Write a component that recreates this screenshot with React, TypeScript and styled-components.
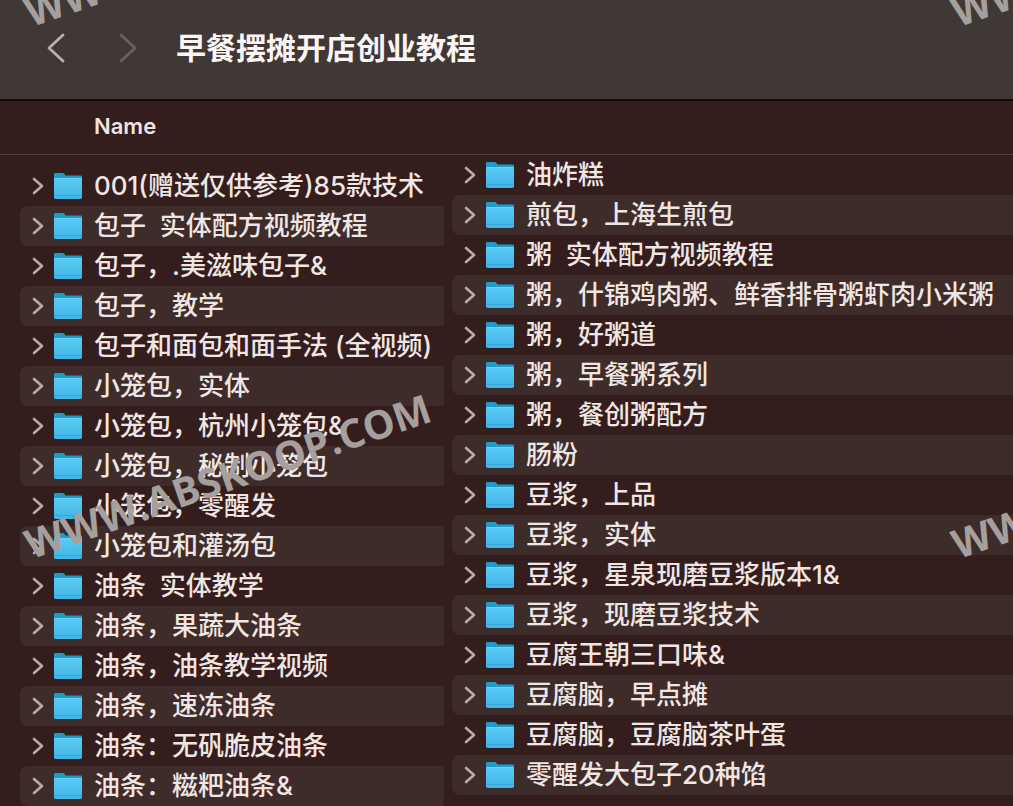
import React from "react";
import styled, { createGlobalStyle } from "styled-components";

const GlobalStyle = createGlobalStyle`
  *, *::before, *::after { box-sizing: border-box; }
  body {
    margin: 0;
    background: #341e1d;
    color: #efe6e4;
    font-family: Inter, "Noto Sans CJK SC", sans-serif;
  }
  button { font: inherit; }
`;

const Window = styled.div`
  position: relative;
  min-height: 100vh;
  overflow: hidden;
`;

const Toolbar = styled.header`
  display: flex;
  align-items: center;
  height: 101px;
  padding: 0 40px 4px;
  background: #403836;
  border-bottom: 2px solid #140a0a;
`;

const NavButton = styled.button`
  display: grid;
  place-items: center;
  width: 32px;
  height: 40px;
  margin-right: 40px;
  padding: 0;
  border: 0;
  background: none;
  color: #b8b0ae;

  &:disabled {
    color: #6a605e;
  }
`;

const Title = styled.h1`
  margin: 0 0 0 -8px;
  color: #fbf5f3;
  font-size: 30px;
  font-weight: 700;
  line-height: 40px;
  white-space: nowrap;
`;

const ColumnHeader = styled.div`
  height: 54px;
  padding: 0 94px;
  border-bottom: 1px solid #533c39;
  color: #f0e4e2;
  font-size: 22px;
  font-weight: 600;
  line-height: 50px;
`;

const Columns = styled.main`
  display: grid;
  grid-template-columns: minmax(444px, 43%) 1fr;
  column-gap: 8px;
`;

const List = styled.ul<{ $side: "left" | "right" }>`
  margin: 0;
  padding: ${(p) => (p.$side === "left" ? "11px 0 0 20px" : "0")};
  list-style: none;
  min-width: 0;
`;

const Row = styled.li<{ $side: "left" | "right" }>`
  display: flex;
  align-items: center;
  height: 40px;
  padding-left: 11px;
  border-radius: ${(p) => (p.$side === "left" ? "8px 2px 2px 8px" : "8px 0 0 8px")};

  &:nth-child(even) {
    background: #3e2c2a;
  }
`;

const Disclosure = styled.button`
  display: grid;
  place-items: center;
  flex: none;
  width: 14px;
  height: 24px;
  margin-right: 8px;
  padding: 0;
  border: 0;
  background: none;
  color: #b8acaa;
`;

const Folder = styled.svg`
  flex: none;
  width: 30px;
  height: 28px;
  margin-right: 11px;
`;

const FileName = styled.span`
  font-size: 26px;
  font-weight: 500;
  line-height: 40px;
  white-space: pre;
`;

const Watermark = styled.span<{ $x: number; $y: number }>`
  position: absolute;
  left: ${(p) => p.$x}px;
  top: ${(p) => p.$y}px;
  color: #a5a09d;
  font-family: "Open Sans", sans-serif;
  font-size: 40px;
  font-weight: 700;
  line-height: 40px;
  white-space: nowrap;
  transform: rotate(-19deg);
  transform-origin: left bottom;
  pointer-events: none;
`;

const leftFolders = [
  "001(赠送仅供参考)85款技术",
  "包子  实体配方视频教程",
  "包子，.美滋味包子&",
  "包子，教学",
  "包子和面包和面手法 (全视频)",
  "小笼包，实体",
  "小笼包，杭州小笼包&",
  "小笼包，秘制小笼包",
  "小笼包，零醒发",
  "小笼包和灌汤包",
  "油条  实体教学",
  "油条，果蔬大油条",
  "油条，油条教学视频",
  "油条，速冻油条",
  "油条：无矾脆皮油条",
  "油条：糍粑油条&",
];

const rightFolders = [
  "油炸糕",
  "煎包，上海生煎包",
  "粥  实体配方视频教程",
  "粥，什锦鸡肉粥、鲜香排骨粥虾肉小米粥",
  "粥，好粥道",
  "粥，早餐粥系列",
  "粥，餐创粥配方",
  "肠粉",
  "豆浆，上品",
  "豆浆，实体",
  "豆浆，星泉现磨豆浆版本1&",
  "豆浆，现磨豆浆技术",
  "豆腐王朝三口味&",
  "豆腐脑，早点摊",
  "豆腐脑，豆腐脑茶叶蛋",
  "零醒发大包子20种馅",
];

const watermarks = [
  { x: 33, y: -8 },
  { x: 960, y: -8 },
  { x: 33, y: 524 },
  { x: 960, y: 524 },
];

function FolderIcon() {
  return (
    <Folder viewBox="0 0 30 28" aria-hidden="true">
      <path d="M1 2.2Q1 1 2.2 1H9.5Q10.5 1 11.2 1.8L12.6 3.4H27.8Q29 3.4 29 4.6V12H1Z" fill="#1f9ccb" />
      <rect x="1" y="6" width="28" height="21" rx="1.4" fill="url(#folder-face)" />
      <path d="M1.5 6.5H28.5" stroke="#6fd2f5" />
      <path d="M2 23.5H28" stroke="#3aa6d6" />
    </Folder>
  );
}

function FolderList({ names, side }: { names: string[]; side: "left" | "right" }) {
  return (
    <List $side={side}>
      {names.map((name) => (
        <Row key={name} $side={side}>
          <Disclosure type="button" aria-label={`Expand ${name}`}>
            <svg width="12" height="18" viewBox="0 0 12 18" fill="none" stroke="currentColor" strokeWidth="2.6" strokeLinecap="round" strokeLinejoin="round">
              <path d="M2 2L10 9L2 16" />
            </svg>
          </Disclosure>
          <FolderIcon />
          <FileName>{name}</FileName>
        </Row>
      ))}
    </List>
  );
}

const Definitions = styled.svg`
  position: absolute;
  width: 0;
  height: 0;
`;

export default function App() {
  return (
    <Window lang="zh-CN">
      <GlobalStyle />
      <Definitions aria-hidden="true">
        <linearGradient id="folder-face" x1="0" y1="0" x2="0" y2="1">
          <stop offset="0" stopColor="#5acbf6" />
          <stop offset="1" stopColor="#3fb4e6" />
        </linearGradient>
      </Definitions>
      <Toolbar>
        <NavButton type="button" aria-label="Back">
          <svg width="18" height="30" viewBox="0 0 18 30" fill="none" stroke="currentColor" strokeWidth="2.8" strokeLinecap="round" strokeLinejoin="round">
            <path d="M16 2L2 15L16 28" />
          </svg>
        </NavButton>
        <NavButton type="button" aria-label="Forward" disabled>
          <svg width="18" height="30" viewBox="0 0 18 30" fill="none" stroke="currentColor" strokeWidth="2.8" strokeLinecap="round" strokeLinejoin="round">
            <path d="M2 2L16 15L2 28" />
          </svg>
        </NavButton>
        <Title>早餐摆摊开店创业教程</Title>
      </Toolbar>
      <ColumnHeader>Name</ColumnHeader>
      <Columns>
        <FolderList names={leftFolders} side="left" />
        <FolderList names={rightFolders} side="right" />
      </Columns>
      {watermarks.map((mark) => (
        <Watermark key={`${mark.x}-${mark.y}`} $x={mark.x} $y={mark.y}>
          WWW.ABSKOOP.COM
        </Watermark>
      ))}
    </Window>
  );
}
